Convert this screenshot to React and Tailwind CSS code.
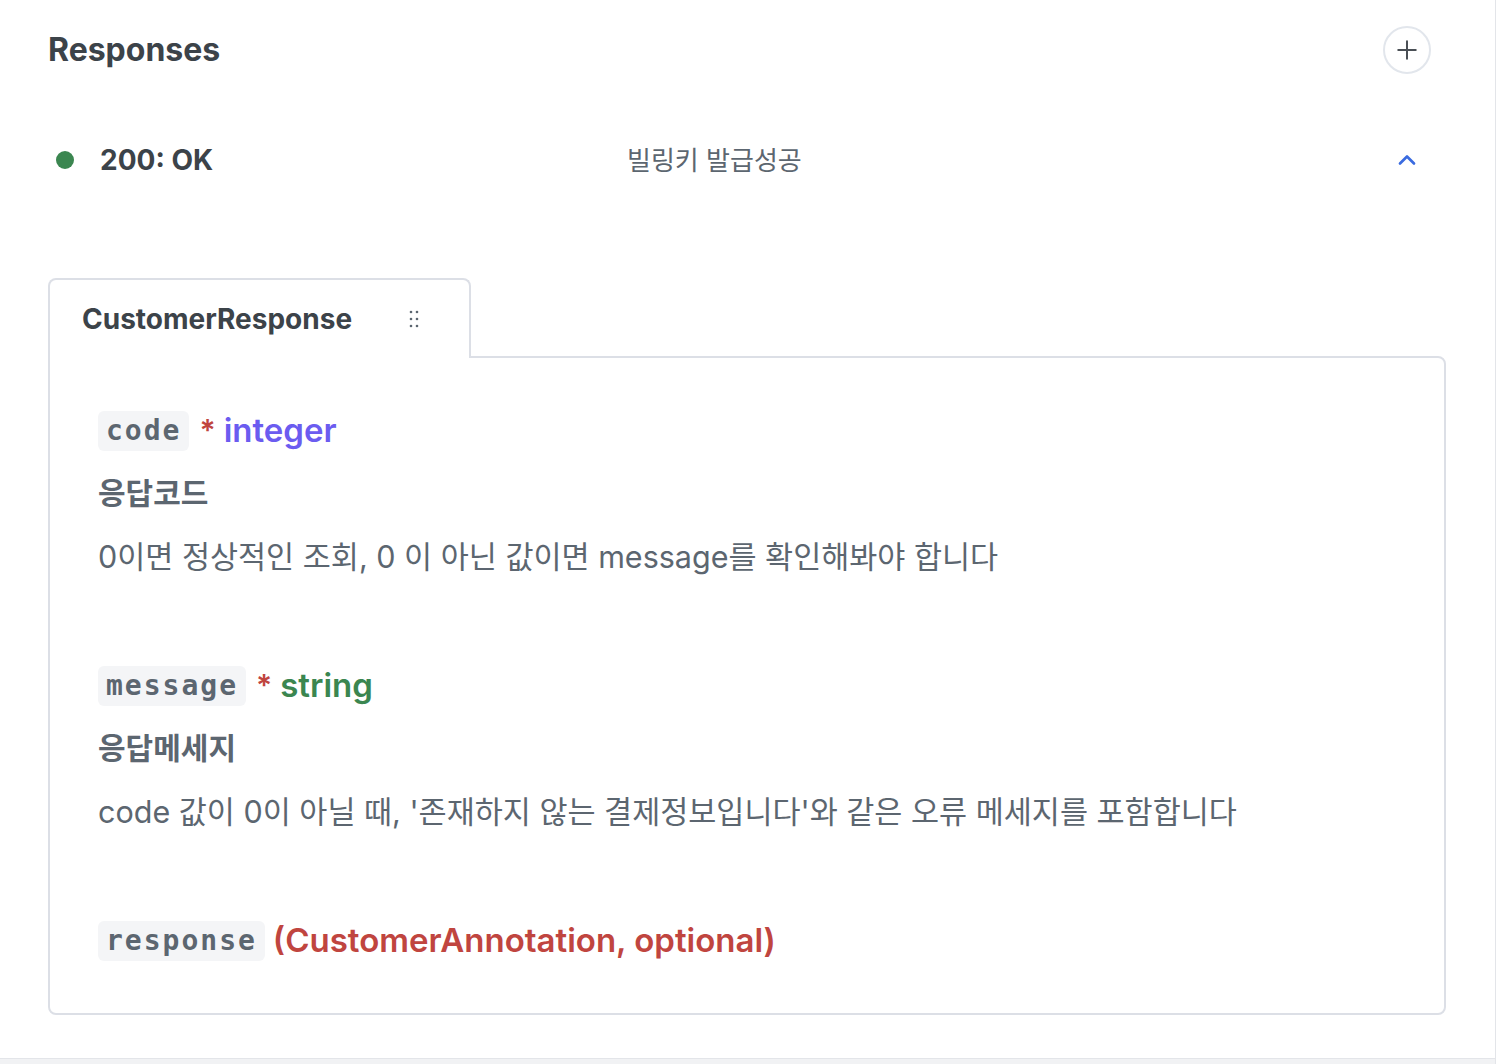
import React from "react";
import { Plus, ChevronUp } from "lucide-react";

const sans = "font-['Inter','Noto_Sans_CJK_KR',sans-serif]";
const mono = "font-['DejaVu_Sans_Mono','Liberation_Mono',monospace]";

const fields = [
  {
    name: "code",
    required: true,
    type: "integer",
    typeClass: "text-[#6b5cf0]",
    title: "응답코드",
    desc: "0이면 정상적인 조회, 0 이 아닌 값이면 message를 확인해봐야 합니다",
  },
  {
    name: "message",
    required: true,
    type: "string",
    typeClass: "text-[#3b8650]",
    title: "응답메세지",
    desc: "code 값이 0이 아닐 때, '존재하지 않는 결제정보입니다'와 같은 오류 메세지를 포함합니다",
  },
  {
    name: "response",
    required: false,
    type: "(CustomerAnnotation, optional)",
    typeClass: "text-[#c0453f]",
  },
];

const DragDots = () => (
  <svg width="10" height="20" viewBox="0 0 10 20" className="text-[#5c6670]">
    {[3, 10, 17].map((y) => (
      <g key={y} fill="currentColor">
        <circle cx="2" cy={y} r="1.3" />
        <circle cx="8" cy={y} r="1.3" />
      </g>
    ))}
  </svg>
);

const Field = ({ field }) => (
  <div className="mb-[89px] last:mb-0">
    <div className="flex items-center h-[40px]">
      <span
        className={`${mono} font-bold text-[28px] tracking-[2px] text-[#5c6670] bg-[#f4f5f7] rounded-md h-[40px] flex items-center px-[8px]`}
      >
        {field.name}
      </span>
      {field.required && (
        <span className="text-[#c0453f] font-semibold text-[30px] ml-[10px] leading-none self-start mt-[4px]">*</span>
      )}
      <span className={`${field.typeClass} font-semibold text-[33px] ml-[8px]`}>{field.type}</span>
    </div>
    {field.title && (
      <div className="mt-[22px] h-[40px] flex items-center text-[30px] font-semibold text-[#5c6670]">
        {field.title}
      </div>
    )}
    {field.desc && (
      <div className="mt-[24px] h-[40px] flex items-center text-[30.5px] text-[#5c6670]">{field.desc}</div>
    )}
  </div>
);

export default function App() {
  return (
    <div className={`${sans} w-full h-[1064px] bg-white flex flex-col border-r border-[#e3e5e9]`}>
      <div className="flex-1 pl-12 pr-[49px]">
        {/* Header */}
        <div className="h-[100px] flex items-center justify-between pr-[15px]">
          <h2 className="text-[32px] font-bold text-[#3c4349]">Responses</h2>
          <button className="w-[48px] h-[48px] rounded-full border-2 border-[#e2e6ec] flex items-center justify-center text-[#4a4f55]">
            <Plus className="w-[30px] h-[30px]" strokeWidth={1.6} />
          </button>
        </div>

        {/* Status row */}
        <div className="h-[120px] flex items-center">
          <span className="w-[18px] h-[18px] rounded-full bg-[#3b8650] ml-2" />
          <span className="ml-[26px] w-[527px] text-[28px] font-bold text-[#3c4349]">200: OK</span>
          <span className="text-[26px] text-[#5c6670]">빌링키 발급성공</span>
          <ChevronUp className="ml-auto mr-[25px] w-[28px] h-[28px] text-[#3a6be0]" strokeWidth={2.3} />
        </div>

        {/* Tabs */}
        <div className="mt-[58px] flex">
          <div className="relative z-10 -mb-[2px] w-[423px] h-[80px] bg-white border-2 border-b-0 border-[#dcdfe6] rounded-t-lg flex items-center justify-between pl-[32px] pr-[50px]">
            <span className="text-[28px] font-bold text-[#3c4349]">CustomerResponse</span>
            <DragDots />
          </div>
        </div>
        <div className="border-2 border-[#dcdfe6] rounded-b-lg rounded-tr-lg pl-[48px] pt-[53px] pb-[52px]">
          {fields.map((f) => (
            <Field key={f.name} field={f} />
          ))}
        </div>
      </div>
      <div className="h-[6px] bg-[#f1f2f4] border-t border-[#e3e5e9]" />
    </div>
  );
}
